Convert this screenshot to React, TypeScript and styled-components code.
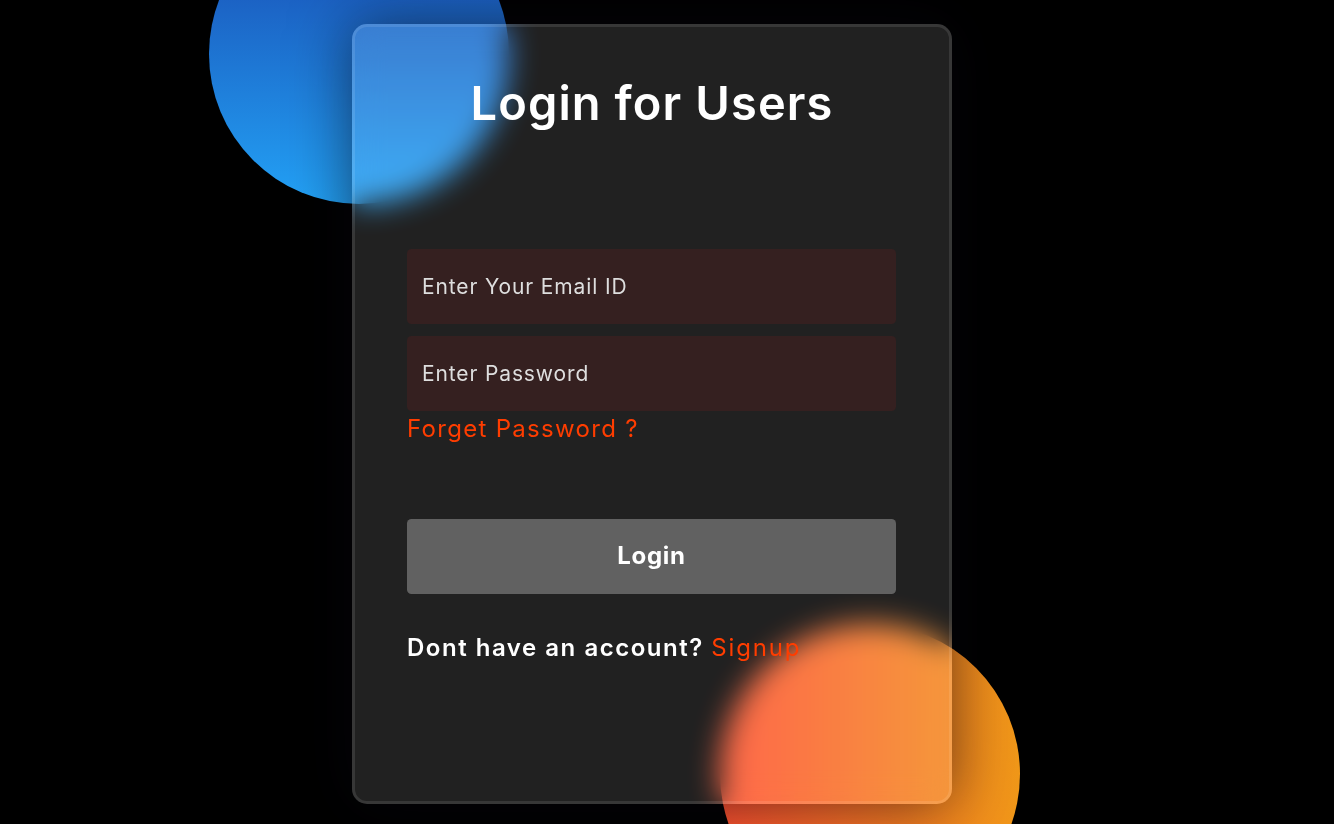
import React from "react";
import styled, { createGlobalStyle } from "styled-components";

const GlobalStyle = createGlobalStyle`
  *, *::before, *::after {
    box-sizing: border-box;
    margin: 0;
    padding: 0;
  }
  body {
    background: #000;
    font-family: Inter, "Open Sans", sans-serif;
    overflow: hidden;
  }
`;

const Page = styled.main`
  display: flex;
  justify-content: center;
  width: 1304px;
  height: 824px;
  padding-top: 24px;
  overflow: hidden;
`;

const Stage = styled.div`
  position: relative;
  display: flex;
  justify-content: center;
  width: 645px;
  height: 780px;
`;

const Circle = styled.div<{ $place: "top" | "bottom" }>`
  position: absolute;
  width: 300px;
  height: 300px;
  border-radius: 50%;
  ${({ $place }) =>
    $place === "top"
      ? "left: -120.5px; top: -120px; background: linear-gradient(#1845ad, #23a2f6);"
      : "right: -45px; bottom: -120px; background: linear-gradient(to right, #ff512f, #f09819);"}
`;

const Card = styled.form`
  position: relative;
  display: flex;
  flex-direction: column;
  width: 600px;
  height: 780px;
  padding: 48px 52px 0;
  border: 3px solid rgba(255, 255, 255, 0.1);
  border-radius: 15px;
  background-color: rgba(255, 255, 255, 0.13);
  backdrop-filter: blur(15px);
  box-shadow: 0 0 60px rgba(8, 7, 16, 0.6);
  color: #fff;
`;

const Title = styled.h1`
  height: 72px;
  margin-bottom: 102px;
  font-size: 47px;
  font-weight: 600;
  line-height: 56px;
  letter-spacing: 1.1px;
  text-align: center;
  white-space: nowrap;
`;

const Field = styled.input`
  flex: none;
  width: 489px;
  height: 75px;
  margin-bottom: 11.5px;
  padding: 0 15px;
  border: 0;
  border-radius: 4.5px;
  outline: 0;
  background: rgba(255, 20, 20, 0.09);
  color: #fff;
  font: 400 21px Inter, "Open Sans", sans-serif;
  letter-spacing: 0.87px;

  &::placeholder {
    color: #dedede;
    opacity: 1;
  }
`;

const Link = styled.a<{ $spacing?: number }>`
  color: #ff3d00;
  font-size: 24px;
  font-weight: 400;
  letter-spacing: ${({ $spacing = 1.3 }) => $spacing}px;
  text-decoration: none;
`;

const ForgetRow = styled.div`
  height: 108px;
  margin-top: -11.5px;
  line-height: 35px;
`;

const Submit = styled.button`
  width: 489px;
  height: 75px;
  padding-bottom: 2px;
  border: 0;
  border-radius: 4.5px;
  background: rgba(255, 255, 255, 0.29);
  color: #fff;
  font: 700 24px Inter, "Open Sans", sans-serif;
  letter-spacing: 0.7px;
`;

const SignupRow = styled.p`
  margin-top: 36px;
  font-size: 24px;
  font-weight: 600;
  line-height: 36px;
  letter-spacing: 1.52px;
  white-space: nowrap;
`;

export default function App() {
  return (
    <>
      <GlobalStyle />
      <Page>
        <Stage>
          <Circle $place="top" />
          <Circle $place="bottom" />
          <Card>
            <Title>Login for Users</Title>
            <Field type="email" placeholder="Enter Your Email ID" />
            <Field type="password" placeholder="Enter Password" />
            <ForgetRow>
              <Link href="#">Forget Password ?</Link>
            </ForgetRow>
            <Submit type="button">Login</Submit>
            <SignupRow>
              Dont have an account? <Link href="#" $spacing={1.8}>Signup</Link>
            </SignupRow>
          </Card>
        </Stage>
      </Page>
    </>
  );
}
